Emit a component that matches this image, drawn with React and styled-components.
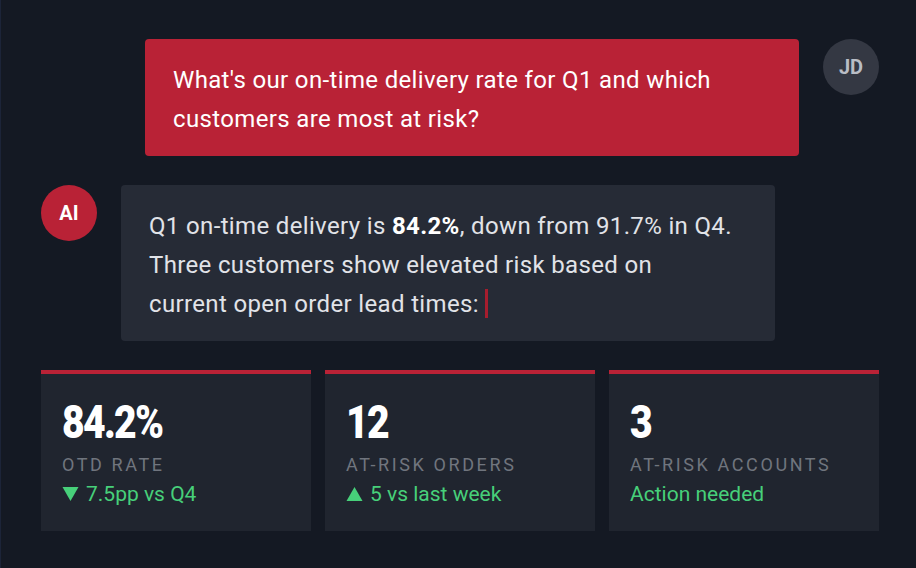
import React from 'react';
import styled, { createGlobalStyle } from 'styled-components';

const GlobalStyle = createGlobalStyle`
  html, body {
    margin: 0;
    padding: 0;
    background: #141923;
  }
  body {
    font-family: Roboto, "Noto Sans", "Liberation Sans", sans-serif;
  }
`;

const Page = styled.div`
  box-sizing: border-box;
  width: 916px;
  height: 568px;
  border-left: 1px solid #1c2438;
  padding: 39px 37px 0 40px;
  display: flex;
  flex-direction: column;
  gap: 29px;
  overflow: hidden;
`;

const Row = styled.div`
  display: flex;
  align-items: flex-start;
  gap: 24px;
  justify-content: ${(p) => (p.$mine ? 'flex-end' : 'flex-start')};
`;

const Avatar = styled.div`
  flex: none;
  width: 56px;
  height: 56px;
  border-radius: 50%;
  display: flex;
  align-items: center;
  justify-content: center;
  font-size: 20px;
  font-weight: 700;
  background: ${(p) => (p.$ai ? '#b92236' : '#343843')};
  color: ${(p) => (p.$ai ? '#ffffff' : '#b9bdc5')};
`;

const Bubble = styled.div`
  box-sizing: border-box;
  width: 654px;
  padding: 22px 42px 17px 28px;
  border-radius: 4px;
  font-size: 24px;
  line-height: 39px;
  letter-spacing: 0.35px;
  background: ${(p) => (p.$mine ? '#b92236' : '#262b36')};
  color: ${(p) => (p.$mine ? '#ffffff' : '#e1e3e8')};

  b {
    color: #ffffff;
    font-weight: 700;
  }
`;

const Caret = styled.span`
  display: inline-block;
  width: 3px;
  height: 29px;
  margin-left: 6px;
  vertical-align: -6px;
  background: #a61d2e;
`;

const Cards = styled.div`
  display: grid;
  grid-template-columns: repeat(3, 1fr);
  gap: 14px;
`;

const Card = styled.div`
  background: #20252f;
  border-top: 4px solid #b92236;
  padding: 25px 21px 23px;
`;

const Value = styled.div`
  font-size: 46px;
  line-height: 46px;
  font-weight: 900;
  letter-spacing: -2px;
  color: #ffffff;
  transform: scaleX(0.85);
  transform-origin: left center;
`;

const Label = styled.div`
  margin-top: 8px;
  font-size: 18px;
  line-height: 24px;
  letter-spacing: 2.6px;
  color: #70757e;
  white-space: nowrap;
`;

const Trend = styled.div`
  margin-top: 3px;
  display: flex;
  align-items: center;
  gap: 7px;
  font-size: 21px;
  line-height: 28px;
  color: #47d07a;

  svg {
    flex: none;
  }
`;

const Arrow = ({ up }) => (
  <svg width="17" height="16" viewBox="0 0 17 16">
    <path d={up ? 'M8.5 1 L16.5 15 L0.5 15 Z' : 'M0.5 1 L16.5 1 L8.5 15 Z'} fill="#47d07a" />
  </svg>
);

const stats = [
  { value: '84.2%', label: 'OTD RATE', trend: '7.5pp vs Q4', dir: 'down' },
  { value: '12', label: 'AT-RISK ORDERS', trend: '5 vs last week', dir: 'up' },
  { value: '3', label: 'AT-RISK ACCOUNTS', trend: 'Action needed' },
];

export default function App() {
  return (
    <>
      <GlobalStyle />
      <Page>
        <Row $mine>
          <Bubble $mine>
            What's our on-time delivery rate for Q1 and which customers are most at risk?
          </Bubble>
          <Avatar>JD</Avatar>
        </Row>
        <Row>
          <Avatar $ai>AI</Avatar>
          <Bubble>
            Q1 on-time delivery is <b>84.2%</b>, down from 91.7% in Q4. Three customers show
            elevated risk based on current open order lead times:
            <Caret />
          </Bubble>
        </Row>
        <Cards>
          {stats.map((s) => (
            <Card key={s.label}>
              <Value>{s.value}</Value>
              <Label>{s.label}</Label>
              <Trend>
                {s.dir && <Arrow up={s.dir === 'up'} />}
                {s.trend}
              </Trend>
            </Card>
          ))}
        </Cards>
      </Page>
    </>
  );
}
